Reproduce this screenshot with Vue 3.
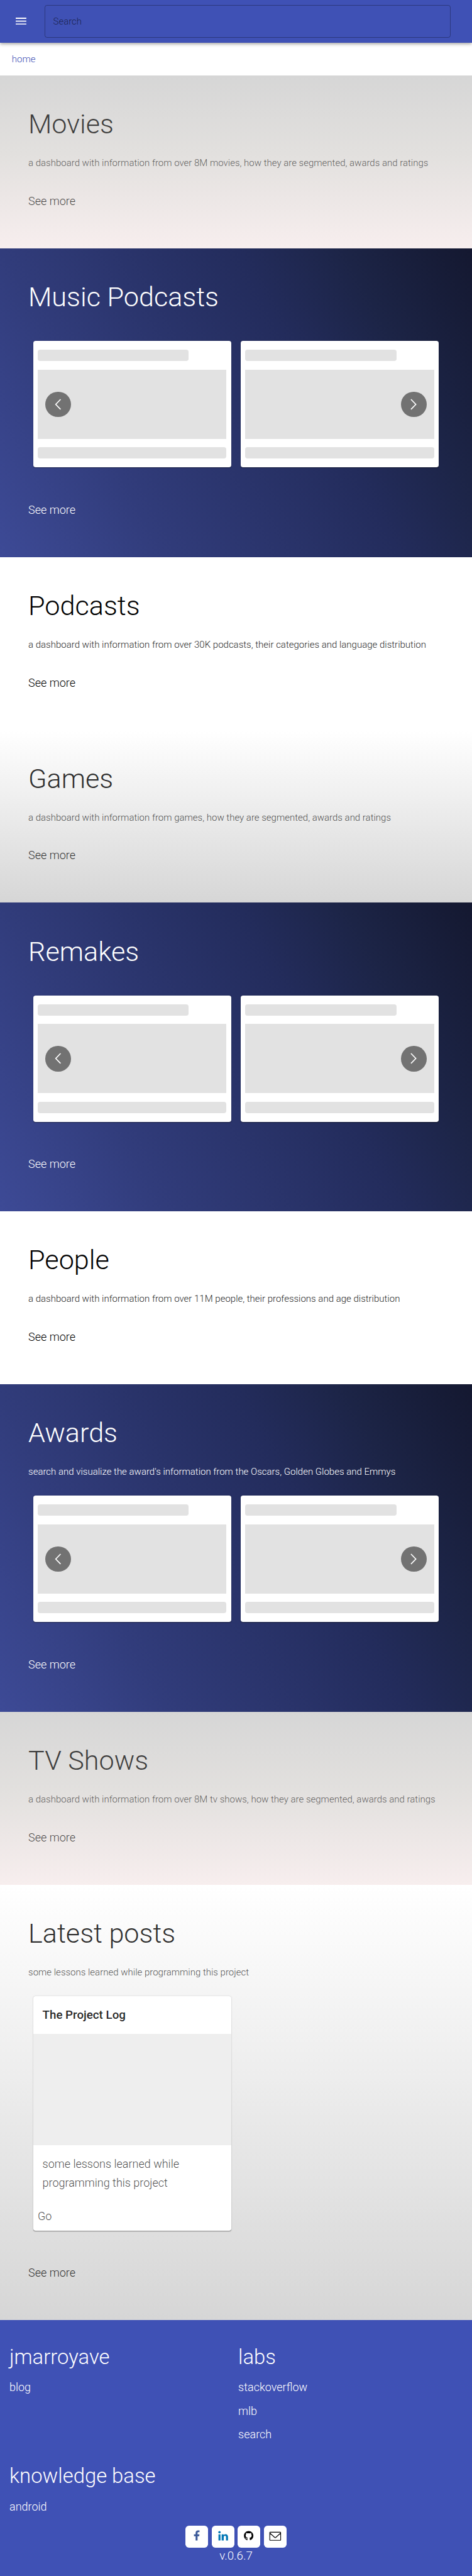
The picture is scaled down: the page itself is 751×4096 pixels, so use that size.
<script setup>
const sections = [
  { title: 'Movies', tone: 'mist', text: 'a dashboard with information from over 8M movies, how they are segmented, awards and ratings' },
  { title: 'Music Podcasts', tone: 'night', carousel: true },
  { title: 'Podcasts', tone: 'plain', text: 'a dashboard with information from over 30K podcasts, their categories and language distribution' },
  { title: 'Games', tone: 'fade', text: 'a dashboard with information from games, how they are segmented, awards and ratings' },
  { title: 'Remakes', tone: 'night', carousel: true },
  { title: 'People', tone: 'plain', text: 'a dashboard with information from over 11M people, their professions and age distribution' },
  { title: 'Awards', tone: 'night', carousel: true, text: "search and visualize the award's information from the Oscars, Golden Globes and Emmys" },
  { title: 'TV Shows', tone: 'mist', text: 'a dashboard with information from over 8M tv shows, how they are segmented, awards and ratings' },
  { title: 'Latest posts', tone: 'fade', text: 'some lessons learned while programming this project', post: true },
]
const columns = [
  { title: 'jmarroyave', links: ['blog'] },
  { title: 'labs', links: ['stackoverflow', 'mlb', 'search'] },
  { title: 'knowledge base', links: ['android'] },
]
</script>

<template>
  <div class="page">
    <header class="toolbar">
      <svg class="menu" viewBox="0 0 18 12"><path d="M0 0h18v2H0zM0 5h18v2H0zM0 10h18v2H0z" fill="#fff" /></svg>
      <div class="search"><span>Search</span></div>
    </header>
    <nav class="crumbs"><a>home</a></nav>

    <section v-for="s in sections" :key="s.title" class="section" :class="s.tone">
      <h1>{{ s.title }}</h1>
      <p v-if="s.text" class="desc">{{ s.text }}</p>
      <div v-if="s.carousel" class="carousel" :class="{ bare: !s.text }">
        <div v-for="n in 2" :key="n" class="card ghost">
          <i class="bar short"></i>
          <i class="block"></i>
          <i class="bar"></i>
        </div>
        <button class="arrow prev"><svg viewBox="0 0 43 43"><path d="M26 12.800L17.800 21.300l8.200 8.500" /></svg></button>
        <button class="arrow next"><svg viewBox="0 0 43 43"><path d="M17 12.800L25.200 21.300l-8.200 8.500" /></svg></button>
      </div>
      <div v-if="s.post" class="posts">
        <article class="card post">
          <h2>The Project Log</h2>
          <div class="media"></div>
          <p>some lessons learned while programming this project</p>
          <a class="go">Go</a>
        </article>
      </div>
      <a class="more">See more</a>
    </section>

    <footer class="footer">
      <div class="columns">
        <div v-for="c in columns" :key="c.title" class="column">
          <h3>{{ c.title }}</h3>
          <a v-for="l in c.links" :key="l">{{ l }}</a>
        </div>
      </div>
      <div class="social">
        <a><svg viewBox="0 0 38 38"><path fill="#3b5998" d="M23.9 8v3h-1.7c-1.3 0-1.6.6-1.6 1.6v2h3.2l-.4 3.2h-2.8V25h-3.3v-7.2h-2.8v-3.2h2.8v-2.4c0-2.8 1.7-4.3 4.2-4.3 1.1 0 2.1.1 2.4.1z" /></svg></a>
        <a><svg viewBox="0 0 38 38"><g fill="#0077b5"><circle cx="13" cy="11" r="2" /><path d="M11.3 14.6h3.4V25h-3.4zM16.7 14.6H20v1.5c.6-1 1.7-1.8 3.4-1.8 2.6 0 4.1 1.7 4.1 4.7V25h-3.400v-5.600c0-1.400-.5-2.300-1.700-2.300-1.200 0-2.100.7-2.100 2.300V25h-3.600z" /></g></svg></a>
        <a><svg viewBox="0 0 38 38"><path transform="translate(10.8 9)" d="M8 0C3.580 0 0 3.580 0 8c0 3.540 2.290 6.530 5.470 7.590.4.070.550-.170.550-.380 0-.190-.010-.820-.010-1.490-2.010.370-2.530-.490-2.690-.940-.090-.230-.480-.940-.820-1.130-.280-.150-.680-.520-.010-.530.630-.010 1.080.580 1.230.820.720 1.210 1.870.870 2.330.660.070-.520.280-.870.510-1.070-1.780-.2-3.640-.890-3.640-3.950 0-.870.310-1.590.820-2.150-.080-.2-.360-1.020.080-2.120 0 0 .670-.210 2.200.820.640-.180 1.320-.270 2-.270.680 0 1.360.090 2 .270 1.530-1.040 2.200-.820 2.200-.820.440 1.100.160 1.920.080 2.120.510.560.820 1.270.820 2.150 0 3.070-1.870 3.750-3.650 3.950.290.250.540.730.540 1.480 0 1.070-.010 1.930-.010 2.200 0 .210.150.460.550.380A8.013 8.013 0 0016 8c0-4.420-3.580-8-8-8z" /></svg></a>
        <a><svg viewBox="0 0 38 38"><path d="M10.500 11h17.200q.6 0 .6.600v12.600q0 .6-.6.600H10.500q-.6 0-.6-.600V11.600q0-.6.600-.6zM10 12.500l8 7.200q1.100.9 2.200 0l8-7.200" fill="none" stroke="#000" stroke-width="1.200" /></svg></a>
      </div>
      <div class="version">v.0.6.7</div>
    </footer>
  </div>
</template>

<style>
body { margin: 0; background: #3f51b5; }
</style>

<style scoped>
.page { zoom: 0.9384; font-family: Roboto, "Liberation Sans", sans-serif; font-weight: 300; color: #000; background: #fff; }
.page * { box-sizing: border-box; }
.toolbar { position: relative; display: flex; align-items: center; height: 72px; padding: 0 36px 0 27px; background: #3f51b5;
  box-shadow: 0 2px 4px -1px rgba(0,0,0,.2), 0 4px 5px rgba(0,0,0,.14), 0 1px 10px rgba(0,0,0,.12); }
.menu { width: 18px; height: 12px; margin-right: 31px; }
.search { flex: 1; height: 56px; padding-left: 13px; border: 1px solid rgba(0,0,0,.3); border-radius: 4px; color: rgba(0,0,0,.6); font-size: 16px; line-height: 54px; }
.crumbs { height: 56px; padding-left: 20px; font-size: 16px; line-height: 56px; color: #3f51b5; }
.section { display: flex; flex-direction: column; padding: 48px 48px 63px; }
.mist { background: linear-gradient(#d6d6d6, #e2e0de 45%, #f7eeee); color: rgba(0,0,0,.72); }
.fade { background: linear-gradient(#fff, #d6d6d6); color: rgba(0,0,0,.82); }
.night { background: linear-gradient(62deg, #3d4a96, #313c7b 26%, #232c5c 63%, #1c2446 80%, #141830); color: #fff; }
h1 { margin: 0; height: 78px; font-size: 46px; font-weight: 300; line-height: 70px; }
.desc { margin: 0; height: 63px; font-size: 16px; line-height: 46px; opacity: .85; }
.night .desc { opacity: 1; }
.more { height: 34px; margin-top: 7px; font-size: 19.200px; line-height: 34px; }
.carousel { position: relative; display: flex; gap: 16px; margin: 0 8px 48px; height: 214px; }
.carousel.bare { margin-top: 31px; }
.card { width: 336px; background: #fff; border-radius: 4px; box-shadow: 0 2px 1px -1px rgba(0,0,0,.2), 0 1px 1px rgba(0,0,0,.14), 0 1px 3px rgba(0,0,0,.12); }
.ghost { display: flex; flex-direction: column; gap: 14.5px; padding: 15px 8px; }
.bar { height: 19px; border-radius: 4px; background: #e2e2e2; }
.short { width: 256px; }
.block { height: 117.500px; background: #e2e2e2; }
.arrow { position: absolute; top: 86px; width: 43px; height: 43px; padding: 0; border: 0; border-radius: 50%; background: #727272; }
.arrow svg { display: block; width: 43px; height: 43px; fill: none; stroke: #fff; stroke-width: 1.800; }
.prev { left: 21px; }
.next { right: 21px; }
.posts { padding: 0 8px; margin-bottom: 48px; }
.post { display: flex; flex-direction: column; height: 397px; color: rgba(0,0,0,.72); }
.post h2 { margin: 0; height: 64px; padding-left: 16px; font-size: 20px; font-weight: 500; line-height: 65px; color: rgba(0,0,0,.87); }
.media { height: 189px; background: #eee; }
.post p { margin: 0; padding: 16px 16px 0; height: 95px; font-size: 19.200px; line-height: 32px; }
.go { padding-left: 8px; font-size: 19.200px; line-height: 48px; }
.footer { height: 433px; background: #3f51b5; color: #fff; }
.columns { display: grid; grid-template-columns: 388px 380px; grid-template-rows: 202px 146px; padding: 0 16px; }
.column { display: flex; flex-direction: column; padding-top: 38px; }
.column > * { flex: none; }
h3 { margin: 0; height: 56px; font-size: 35px; font-weight: 300; line-height: 50px; }
.column a { font-size: 19.200px; line-height: 40px; }
.social { display: flex; justify-content: center; gap: 6.300px; }
.social a { width: 38px; height: 38px; border-radius: 6px; background: #fff; }
.social svg { display: block; width: 38px; height: 38px; }
.version { font-size: 20px; line-height: 29px; text-align: center; }
</style>
